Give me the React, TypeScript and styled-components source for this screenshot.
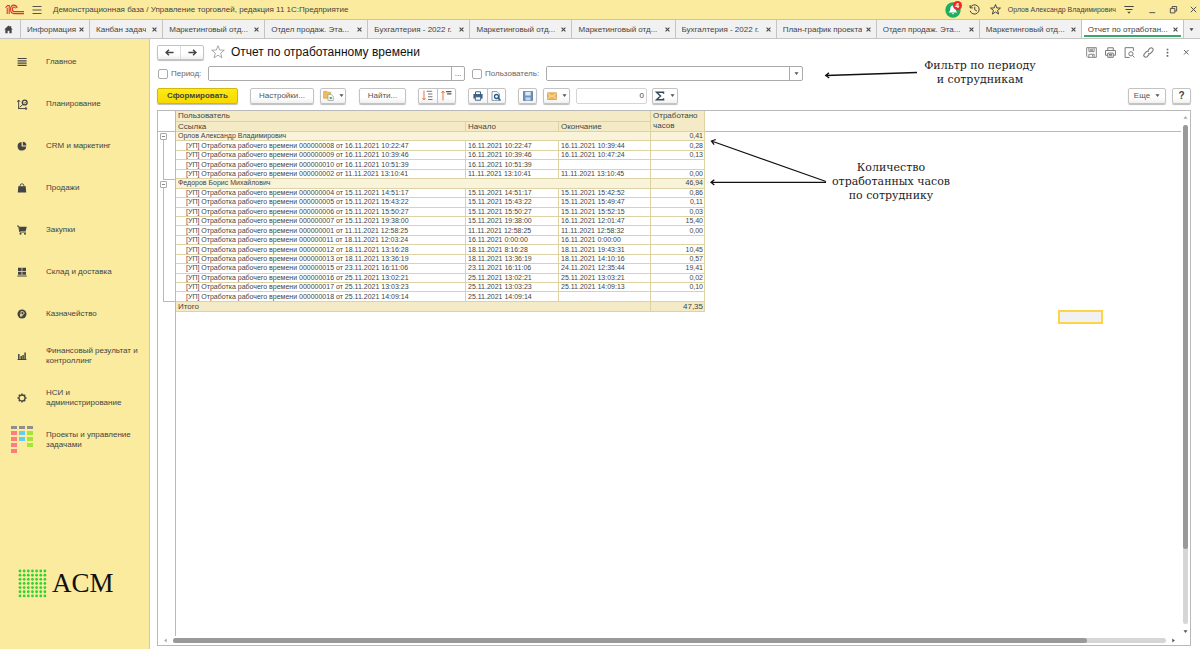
import React from "react";
import styled, { createGlobalStyle, css } from "styled-components";

const Global = createGlobalStyle`
  * { box-sizing: border-box; }
  body { margin: 0; background: #fff; }
  body, button, input { font-family: "Liberation Sans", Arial, sans-serif; font-size: 8px; color: #444; }
  button { padding: 0; border: 0; background: none; }
  svg { display: block; flex: none; }
`;

const Page = styled.div`
  position: relative;
  display: flex;
  flex-direction: column;
  min-height: 100vh;
`;

/* ---------- window header ---------- */
const TitleBar = styled.header`
  display: flex;
  align-items: center;
  height: 19px;
  padding: 0 3px 0 5px;
  background: #fbeb9e;
`;
const AppTitle = styled.div`
  flex: 1;
  padding-left: 11px;
  white-space: nowrap;
`;
const MenuButton = styled.button`
  margin-left: 8px;
`;
const TitleTools = styled.div`
  display: flex;
  align-items: center;
`;
const Bell = styled.button`
  position: relative;
  margin-right: 8px;
`;
const Badge = styled.span`
  position: absolute;
  top: -1px;
  right: -1px;
  width: 9px;
  height: 9px;
  border-radius: 50%;
  background: #f0262d;
  color: #fff;
  font-size: 7px;
  font-weight: bold;
  line-height: 9px;
  text-align: center;
`;
const UserName = styled.span`
  margin: 0 8px 0 7px;
  font-size: 7px;
`;
const WindowTools = styled.div`
  display: flex;
  align-items: center;
  gap: 12px;
  margin-left: 14px;
`;
const StarSlot = styled.button`
  margin-left: 10px;
`;

/* ---------- tabs ---------- */
const TabBar = styled.nav`
  display: flex;
  height: 20px;
  background: #f1f1f1;
  border-top: 1px solid #c9c4ae;
  border-bottom: 1px solid #c4c4c4;
`;
const HomeTab = styled.button`
  display: grid;
  place-items: center;
  width: 20px;
  flex: none;
  padding-right: 3px;
`;
const Tab = styled.div<{ $basis: number; $active?: boolean }>`
  position: relative;
  display: flex;
  align-items: center;
  justify-content: space-between;
  flex: 1 1 ${(p) => p.$basis}px;
  min-width: 0;
  padding: 0 5px 0 6px;
  border-left: 1px solid #c4c4c4;
  ${(p) =>
    p.$active &&
    css`
      background: #fff;
      &::after {
        content: "";
        position: absolute;
        left: 2px;
        right: 2px;
        bottom: 1px;
        height: 2px;
        background: #3aa866;
      }
    `}
`;
const TabLabel = styled.button`
  overflow: hidden;
  white-space: nowrap;
`;
const TabList = styled.button`
  display: grid;
  place-items: center;
  width: 17px;
  flex: none;
  border-left: 1px solid #c4c4c4;
`;

/* ---------- body ---------- */
const Body = styled.div`
  display: flex;
  flex: 1;
`;
const Sidebar = styled.aside`
  display: flex;
  flex-direction: column;
  width: 150px;
  flex: none;
  padding-top: 2px;
  background: #fbeb9e;
  border-right: 1px solid #cfc9ae;
`;
const NavItem = styled.a`
  display: grid;
  grid-template-columns: 26px 1fr;
  column-gap: 11px;
  align-items: center;
  height: 42px;
  padding: 0 8px 0 9px;
  color: #444;
  line-height: 10px;
  text-decoration: none;
`;
const NavIcon = styled.span`
  display: grid;
  place-items: center;
`;
const Brand = styled.div`
  display: flex;
  align-items: center;
  gap: 5px;
  margin-top: auto;
  padding: 0 0 50px 18px;
  font-family: "Liberation Serif", "Times New Roman", serif;
  font-size: 27px;
  line-height: 32px;
  color: #111;
`;
const Main = styled.main`
  display: flex;
  flex-direction: column;
  flex: 1;
  min-width: 0;
  padding: 5px 9px 3px 7px;
`;

const raised = css`
  border: 1px solid #c3c3c3;
  border-radius: 2px;
  background: linear-gradient(#fff 60%, #f0f0f0);
  box-shadow: 0 1px 1px #bdbdbd;
`;
const HeadingRow = styled.div`
  display: flex;
  align-items: center;
  height: 16px;
`;
const NavPair = styled.div`
  ${raised}
  display: flex;
  width: 47px;
  height: 15px;
  & > button { display: grid; place-items: center; flex: 1; }
  & > button + button { border-left: 1px solid #ddd; }
`;
const Favourite = styled.button`
  margin: 0 6px 0 7px;
`;
const Heading = styled.h1`
  flex: 1;
  margin: 0;
  color: #111;
  font-size: 12px;
  font-weight: normal;
  line-height: 16px;
`;
const HeadingTools = styled.div`
  display: flex;
  align-items: center;
  gap: 8px;
`;

const FilterRow = styled.div`
  display: flex;
  align-items: center;
  height: 15px;
  margin-top: 6px;
`;
const Check = styled.input`
  appearance: none;
  width: 10px;
  height: 10px;
  margin: 0 3px 0 1px;
  border: 1px solid #aaa;
  border-radius: 2px;
  background: #fff;
`;
const FilterLabel = styled.label<{ $width: number }>`
  width: ${(p) => p.$width}px;
  color: #666;
  white-space: nowrap;
`;
const Field = styled.div`
  display: flex;
  width: 257px;
  height: 15px;
  margin-right: 6px;
  border: 1px solid #aaa;
  border-radius: 2px;
  overflow: hidden;
  & > input { flex: 1; min-width: 0; border: 0; padding: 0 4px; outline: 0; }
  & > button { display: grid; place-items: center; width: 13px; border-left: 1px solid #aaa; }
`;

const Toolbar = styled.div`
  display: flex;
  align-items: center;
  height: 17px;
  margin-top: 6px;
`;
const ToolButton = styled.button<{ $width: number; $gap?: number; $primary?: boolean }>`
  ${raised}
  display: flex;
  align-items: center;
  justify-content: center;
  gap: 5px;
  width: ${(p) => p.$width}px;
  height: 16px;
  margin-left: ${(p) => p.$gap ?? 0}px;
  color: #555;
  ${(p) =>
    p.$primary &&
    css`
      border-color: #d3b70a;
      background: linear-gradient(#ffea14, #f7d800);
      color: #444;
      font-weight: bold;
    `}
`;
const HelpMark = styled.b`
  color: #444;
  font-size: 10px;
`;
const ToolPair = styled.div`
  ${raised}
  display: flex;
  width: 38px;
  height: 16px;
  margin-left: 12px;
  & > button { display: grid; place-items: center; flex: 1; }
  & > button + button { border-left: 1px solid #c3c3c3; }
`;
const SumField = styled.input`
  width: 71px;
  height: 16px;
  margin-left: 6px;
  padding: 0 2px;
  border: 1px solid #d5d5d5;
  border-radius: 2px;
  text-align: right;
`;
const Spacer = styled.div`
  flex: 1;
`;

/* ---------- report ---------- */
const line = "#b9b9b9";
const Report = styled.section`
  display: flex;
  flex: 1;
  flex-direction: column;
  margin-top: 6px;
  border: 1px solid ${line};
`;
const ReportRow = styled.div`
  display: flex;
  flex: 1;
`;
const Gutter = styled.div`
  width: 18px;
  flex: none;
  border-right: 1px solid ${line};
`;
const HeadStrip = styled.div`
  height: 21px;
  border-bottom: 1px solid ${line};
`;
const Groups = styled.div`
  display: flex;
  flex-direction: column;
  height: 170px;
`;
const Group = styled.div<{ $rows: number }>`
  display: flex;
  flex-direction: column;
  flex: ${(p) => p.$rows} 1 0;
  padding: 1px 0 0 2px;
`;
const Collapse = styled.button`
  display: grid;
  place-items: center;
  width: 7px;
  height: 7px;
  border: 1px solid #aaa;
  border-radius: 1px;
  &::after { content: ""; width: 3px; height: 1px; background: #888; }
`;
const Bracket = styled.div`
  flex: 1;
  margin-left: 3px;
  border: solid ${line};
  border-width: 0 0 1px 1px;
`;
const Filler = styled.div`
  flex: 1;
`;

const sand = "#dcd2a4";
const Table = styled.table`
  width: 529px;
  height: 201px;
  align-self: flex-start;
  flex: none;
  table-layout: fixed;
  border-collapse: separate;
  border-spacing: 0;
  color: #444;
  font-size: 7px;
  line-height: 8px;
  white-space: nowrap;
`;
const Column = styled.col<{ $width: number }>`
  width: ${(p) => p.$width}px;
`;
const Cell = styled.td<{ $kind?: "group" | "total"; $indent?: boolean; $num?: boolean }>`
  padding: 0 1px 0 ${(p) => (p.$indent ? 10 : 2)}px;
  border: solid ${sand};
  border-width: 0 1px 1px 0;
  text-align: ${(p) => (p.$num ? "right" : "left")};
  ${(p) => p.$kind === "group" && css`background: #f9f3da;`}
  ${(p) =>
    p.$kind === "total" &&
    css`
      height: 10px;
      background: #f4ebc6;
      font-size: 8px;
    `}
`;
const HeadCell = styled.th<{ $height: number }>`
  height: ${(p) => p.$height}px;
  padding: 0 2px;
  border: solid ${sand};
  border-width: 0 1px 1px 0;
  background: #f4ebc6;
  font-size: 8px;
  font-weight: normal;
  line-height: ${(p) => (p.$height > 11 ? 10 : 8)}px;
  text-align: left;
  white-space: normal;
`;

const VScroll = styled.div`
  display: flex;
  flex-direction: column;
  align-items: center;
  width: 9px;
  flex: none;
  padding: 4px 0 2px;
  gap: 5px;
`;
const HScroll = styled.div`
  display: flex;
  align-items: center;
  height: 9px;
  flex: none;
  padding: 0 14px 0 5px;
  gap: 5px;
`;
const Track = styled.div<{ $vertical?: boolean }>`
  display: flex;
  flex: 1;
  flex-direction: ${(p) => (p.$vertical ? "column" : "row")};
  ${(p) => (p.$vertical ? "width: 5px;" : "height: 5px;")}
  border-radius: 3px;
  background: #d6d6d6;
`;
const Thumb = styled.div<{ $share: number }>`
  flex: 0 0 ${(p) => p.$share}%;
  border-radius: 3px;
  background: #999;
`;

/* ---------- notes over the report ---------- */
const Note = styled.p<{ $x: number; $y: number; $width: number }>`
  position: absolute;
  left: ${(p) => p.$x}px;
  top: ${(p) => p.$y}px;
  width: ${(p) => p.$width}px;
  margin: 0;
  color: #222;
  font-family: "DejaVu Serif", serif;
  font-size: 11px;
  line-height: 14px;
  text-align: center;
  white-space: nowrap;
`;
const Arrows = styled.svg`
  position: absolute;
  left: 700px;
  top: 60px;
  pointer-events: none;
`;
const Selection = styled.div`
  position: absolute;
  left: 1058px;
  top: 310px;
  width: 45px;
  height: 14px;
  border: 2px solid #fbd44a;
  background: #f1f1f1;
`;

/* ---------- icons ---------- */
type IconProps = { size?: number; box?: number; color?: string; sw?: number; children: React.ReactNode };
const Icon = ({ size = 10, box = 10, color = "#444", sw = 1, children }: IconProps) => (
  <svg width={size} height={size} viewBox={`0 0 ${box} ${box}`} fill="none" stroke={color} strokeWidth={sw}>
    {children}
  </svg>
);
const Cross = ({ size = 5, sw = 1.3 }) => (
  <Icon size={size} box={6} sw={sw}>
    <path d="M.7.7l4.6 4.6M5.3.7L.7 5.3" />
  </Icon>
);
const Caret = ({ dir = "down", color = "#555" }: { dir?: "down" | "up" | "left" | "right"; color?: string }) => {
  const turn = { down: 0, left: 90, up: 180, right: 270 }[dir];
  return (
    <svg width="5" height="5" viewBox="0 0 5 5">
      <path d="M.5 1.3h4L2.5 3.9z" fill={color} transform={`rotate(${turn} 2.5 2.5)`} />
    </svg>
  );
};
const starPath = "M5 .5l1.2 3.100 3.300.1-2.600 2.100.9 3.300L5 7.300 2.200 9.100l.9-3.300L.5 3.700l3.300-.1z";
const ArrowIcon = ({ flip }: { flip?: boolean }) => (
  <Icon size={9} sw={1.6}>
    <path d={flip ? "M.5 5h8M5.6 2L8.8 5 5.6 8" : "M9.5 5h-8M4.4 2L1.2 5l3.2 3"} />
  </Icon>
);
const Logo1C = () => (
  <svg width="19" height="11" viewBox="0 0 19 11" fill="none" stroke="#d9372b" strokeWidth="1.1">
    <path d="M.5 3.600L2.600 1.500h1.600V10M2.200 10V3.800" />
    <path d="M12.200 4C11.600 2.200 10.300 1.100 8.800 1.100 6.700 1.100 5.600 3.100 5.600 5.300s1.300 4.300 3.600 4.300H19" />
    <path d="M10.500 4.300C10.200 3.400 9.600 3 8.900 3 7.800 3 7.400 4 7.400 5.300S8 7.600 9.300 7.600H19" />
  </svg>
);
const FloppyIcon = () => (
  <Icon size={11} color="#777" sw={0.8}>
    <path d="M.6.6h8.800v8.800H1.600L.6 8.400zM2.600.6v3.600h4.800V.6M2.600 9.400V6.600h4.800v2.800M6 7.200v1.600M3.600 2h2.800M3.600 3h2.800" />
  </Icon>
);
const PrinterIcon = () => (
  <Icon size={11} color="#777" sw={0.9}>
    <path d="M2.500 3V.7h5V3M2.500 7.500h-2V3.200h9v4.300h-2M2.500 5.500h5v3.900h-5zM3.600 6.800h2.800M3.600 8h2.800" />
  </Icon>
);
const PreviewIcon = () => (
  <Icon size={11} color="#777" sw={0.9}>
    <path d="M5 9.500H1V.6h7.500v3M7.700 7.700l1.800 1.800" />
    <circle cx="6.300" cy="6.200" r="1.900" />
  </Icon>
);
const LinkIcon = () => (
  <Icon size={11} color="#777">
    <path d="M4.400 3.200l1.800-1.900a1.700 1.700 0 0 1 2.500 2.500L6.900 5.700a1.500 1.500 0 0 1-2.200 0M5.600 6.800L3.800 8.700a1.700 1.700 0 0 1-2.500-2.500L3.100 4.300a1.500 1.500 0 0 1 2.200 0" />
  </Icon>
);

const navIcons = {
  main: <Icon><path d="M.6 1.500h9M.6 3.800h9M.6 6.100h9M.6 8.400h9" strokeWidth="1.200" /></Icon>,
  plan: (
    <Icon size={11}>
      <path d="M1.500 9V1.300M.3 2.500L1.500.9l1.200 1.600M1.200 8.700h7.500M7.500 7.500L9.200 8.700 7.500 9.900M2.500 7.500L5.200 5" strokeWidth=".9" />
      <circle cx="7" cy="3.200" r="2.200" strokeWidth="1.200" />
      <path d="M6.200 3.200l.7.700 1.300-1.500" strokeWidth=".8" />
    </Icon>
  ),
  pie: (
    <Icon>
      <path d="M4.600 1v4.500h4.600A4.300 4.300 0 1 1 4.600 1z" fill="#444" stroke="none" />
      <path d="M5.800.8a3.900 3.900 0 0 1 3.600 3.600H5.800z" fill="#444" stroke="none" />
    </Icon>
  ),
  bag: (
    <Icon>
      <path d="M1.300 3.300h7.400l.5 6.200H.8z" fill="#444" stroke="none" />
      <path d="M3.100 5V2.700a1.900 1.900 0 0 1 3.800 0V5" strokeWidth=".9" />
    </Icon>
  ),
  cart: (
    <Icon>
      <path d="M0 1h1.600l1.200 6h6" />
      <path d="M2 1.800h7.800L8.700 6H2.700z" fill="#444" stroke="none" />
      <circle cx="3.500" cy="8.700" r="1" fill="#444" stroke="none" />
      <circle cx="8" cy="8.700" r="1" fill="#444" stroke="none" />
    </Icon>
  ),
  store: (
    <Icon>
      <path d="M1 .8h3.600v3.300H1zM5.300.8h3.700v3.300H5.300zM1 4.700h3.600v3H1zM5.300 4.700h3.700v3H5.300zM.3 8.400h9.400v1H.3z" fill="#444" stroke="none" />
    </Icon>
  ),
  coin: (
    <Icon>
      <circle cx="5" cy="5" r="4.500" fill="#444" stroke="none" />
      <path d="M4 8V2.600h1.600a1.400 1.400 0 0 1 0 2.900H3M3 6.700h2.800" stroke="#fbeb9e" strokeWidth=".8" />
    </Icon>
  ),
  bars: (
    <Icon>
      <path d="M1.800 3V8M4.200 5V8M6.100 4V8M8.100 1.500V8" strokeWidth="1.500" />
      <path d="M.6 8.500h8.800" />
    </Icon>
  ),
  gear: (
    <Icon>
      <circle cx="5" cy="5" r="3" strokeWidth="1.300" />
      <path d="M5 .5v1.500M5 8v1.500M.5 5H2M8 5h1.500M1.800 1.800l1.100 1.100M7.100 7.100l1.100 1.100M8.200 1.800L7.100 2.900M2.900 7.100L1.800 8.200" strokeWidth="1.400" />
    </Icon>
  ),
  board: (
    <svg width="24" height="30" viewBox="0 0 24 30">
      {[0, 8, 16].map((x) => <rect key={x} x={x + 1} y="1" width="6" height="3" fill="#8f8f8f" />)}
      {[6, 12, 18, 24].map((y) => <rect key={y} x="1" y={y} width="6" height="4" fill="#ff7c82" />)}
      {[6, 12].map((y) => <rect key={y} x="9" y={y} width="6" height="4" fill="#62cff2" />)}
      {[6, 12, 18].map((y) => <rect key={y} x="17" y={y} width="6" height="4" fill="#a3e635" />)}
    </svg>
  ),
};
const navItems: [keyof typeof navIcons, string][] = [
  ["main", "Главное"],
  ["plan", "Планирование"],
  ["pie", "CRM и маркетинг"],
  ["bag", "Продажи"],
  ["cart", "Закупки"],
  ["store", "Склад и доставка"],
  ["coin", "Казначейство"],
  ["bars", "Финансовый результат и контроллинг"],
  ["gear", "НСИ и администрирование"],
  ["board", "Проекты и управление задачами"],
];

const tabs: [string, number][] = [
  ["Информация", 69],
  ["Канбан задач", 73],
  ["Маркетинговый отд...", 102],
  ["Отдел продаж. Эта...", 103],
  ["Бухгалтерия - 2022 г.", 102],
  ["Маркетинговый отд...", 102],
  ["Маркетинговый отд...", 103],
  ["Бухгалтерия - 2022 г.", 101],
  ["План-график проекта", 100],
  ["Отдел продаж. Эта...", 103],
  ["Маркетинговый отд...", 102],
  ["Отчет по отработан...", 102],
];

type Entry = [number: string, from: string, start: string, end: string, hours: string];
const groups: { name: string; hours: string; entries: Entry[] }[] = [
  {
    name: "Орлов Александр Владимирович",
    hours: "0,41",
    entries: [
      ["000000008", "16.11.2021 10:22:47", "16.11.2021 10:22:47", "16.11.2021 10:39:44", "0,28"],
      ["000000009", "16.11.2021 10:39:46", "16.11.2021 10:39:46", "16.11.2021 10:47:24", "0,13"],
      ["000000010", "16.11.2021 10:51:39", "16.11.2021 10:51:39", "", ""],
      ["000000002", "11.11.2021 13:10:41", "11.11.2021 13:10:41", "11.11.2021 13:10:45", "0,00"],
    ],
  },
  {
    name: "Федоров Борис Михайлович",
    hours: "46,94",
    entries: [
      ["000000004", "15.11.2021 14:51:17", "15.11.2021 14:51:17", "15.11.2021 15:42:52", "0,86"],
      ["000000005", "15.11.2021 15:43:22", "15.11.2021 15:43:22", "15.11.2021 15:49:47", "0,11"],
      ["000000006", "15.11.2021 15:50:27", "15.11.2021 15:50:27", "15.11.2021 15:52:15", "0,03"],
      ["000000007", "15.11.2021 19:38:00", "15.11.2021 19:38:00", "16.11.2021 12:01:47", "15,40"],
      ["000000001", "11.11.2021 12:58:25", "11.11.2021 12:58:25", "11.11.2021 12:58:32", "0,00"],
      ["000000011", "18.11.2021 12:03:24", "16.11.2021 0:00:00", "16.11.2021 0:00:00", ""],
      ["000000012", "18.11.2021 13:16:28", "18.11.2021 8:16:28", "18.11.2021 19:43:31", "10,45"],
      ["000000013", "18.11.2021 13:36:19", "18.11.2021 13:36:19", "18.11.2021 14:10:16", "0,57"],
      ["000000015", "23.11.2021 16:11:06", "23.11.2021 16:11:06", "24.11.2021 12:35:44", "19,41"],
      ["000000016", "25.11.2021 13:02:21", "25.11.2021 13:02:21", "25.11.2021 13:03:21", "0,02"],
      ["000000017", "25.11.2021 13:03:23", "25.11.2021 13:03:23", "25.11.2021 14:09:13", "0,10"],
      ["000000018", "25.11.2021 14:09:14", "25.11.2021 14:09:14", "", ""],
    ],
  },
];

const Header = () => (
  <TitleBar>
    <Logo1C />
    <MenuButton aria-label="Меню">
      <Icon><path d="M.5 1.500h9M.5 5h9M.5 8.500h9" strokeWidth=".9" /></Icon>
    </MenuButton>
    <AppTitle>Демонстрационная база / Управление торговлей, редакция 11 1С:Предприятие</AppTitle>
    <TitleTools>
      <Bell aria-label="Оповещения">
        <svg width="16" height="16" viewBox="0 0 16 16">
          <circle cx="8" cy="8" r="7.700" fill="#21ad5e" />
          <path d="M8 3.500c2 0 2.600 1.500 2.700 3.500.1 1.700.6 2.500 1.800 3.500h-9C4.700 9.500 5.200 8.700 5.300 7c.1-2 .7-3.500 2.700-3.500zM6.500 11.200h3L8 12.600z" fill="#fff" />
        </svg>
        <Badge>4</Badge>
      </Bell>
      <button aria-label="История">
        <Icon size={11}>
          <path d="M1.200 3.200A4.200 4.200 0 1 1 1 6.200M1 1v2.500h2.500M5.200 2.500v2.700l2 1.200" strokeWidth=".9" />
        </Icon>
      </button>
      <StarSlot aria-label="Избранное"><Icon size={11}><path d={starPath} strokeWidth=".9" /></Icon></StarSlot>
      <UserName>Орлов Александр Владимирович</UserName>
      <button aria-label="Настройка панели">
        <Icon><path d="M.3 1.500h9.400M1.500 4.500h7" /><path d="M3.300 6.700h3.400L5 8.700z" fill="#444" stroke="none" /></Icon>
      </button>
      <WindowTools>
        <button aria-label="Свернуть"><Icon size={9}><path d="M1.500 8.500h6.500" /></Icon></button>
        <button aria-label="Восстановить">
          <Icon size={9}><path d="M1.500 3.800h5v5h-5zM3.500 3.800V1.700h5v5h-2" /></Icon>
        </button>
        <button aria-label="Закрыть"><Cross size={7} sw={0.8} /></button>
      </WindowTools>
    </TitleTools>
  </TitleBar>
);

const Tabs = () => (
  <TabBar>
    <HomeTab aria-label="Начальная страница">
      <Icon size={9}><path d="M5 .6L.3 5h1.200v4.200h2.500V6.300h2v2.900h2.500V5h1.200L8 3.300V1.200H6.800v1z" fill="#444" stroke="none" /></Icon>
    </HomeTab>
    {tabs.map(([label, basis], i) => (
      <Tab key={i} $basis={basis} $active={i === tabs.length - 1}>
        <TabLabel>{label}</TabLabel>
        <button aria-label="Закрыть вкладку"><Cross /></button>
      </Tab>
    ))}
    <TabList aria-label="Список вкладок"><Caret color="#444" /></TabList>
  </TabBar>
);

const Tools = () => (
  <Toolbar>
    <ToolButton $width={81} $primary>Сформировать</ToolButton>
    <ToolButton $width={64} $gap={12}>Настройки...</ToolButton>
    <ToolButton $width={26} $gap={6} aria-label="Варианты отчета">
      <Icon size={11}>
        <path d="M.5 1.200h3l.8.8H7v5.500H.5z" fill="#efbd5c" stroke="#d99f3c" strokeWidth=".6" />
        <path d="M4.500 4h3l1.800 1.800v3.700H4.500z" fill="#fff" stroke="#999" strokeWidth=".7" />
        <circle cx="7" cy="7.300" r="1.100" fill="#56ad6b" stroke="none" />
      </Icon>
      <Caret />
    </ToolButton>
    <ToolButton $width={47} $gap={13}>Найти...</ToolButton>
    <ToolPair>
      <button aria-label="Развернуть группы">
        <Icon size={11}>
          <path d="M1.800.5v8.500M.3 7.300L1.800 9l1.500-1.700" stroke="#ef6c3c" strokeWidth=".9" />
          <path d="M4.200 1.200h5M5.500 3.700h4M5.500 6.200h4M5.500 8.700h4" stroke="#777" />
        </Icon>
      </button>
      <button aria-label="Свернуть группы">
        <Icon size={11}>
          <path d="M1.800 9.500V1M.3 2.700L1.800 1l1.500 1.700" stroke="#ef6c3c" strokeWidth=".9" />
          <path d="M4.500 1.500h5M5.500 3.500h4" stroke="#555" strokeWidth="1.200" />
        </Icon>
      </button>
    </ToolPair>
    <ToolPair>
      <button aria-label="Печать">
        <Icon size={10} color="#3e6286">
          <path d="M2.500 3V.8h5V3" />
          <path d="M.4 3h9.200v4.500H.4z" fill="#3e6286" stroke="none" />
          <path d="M2.300 5.800h5.400v3.400H2.300z" fill="#fff" />
        </Icon>
      </button>
      <button aria-label="Просмотр">
        <Icon size={10} color="#8a98a5">
          <path d="M1 .6h5l2.500 2.500v6.300H1z" fill="#fff" />
          <circle cx="5.500" cy="5.500" r="2" stroke="#245f8f" strokeWidth="1.300" />
          <path d="M7 7l2.500 2.500" stroke="#245f8f" strokeWidth="1.500" />
        </Icon>
      </button>
    </ToolPair>
    <ToolButton $width={19} $gap={12} aria-label="Сохранить">
      <Icon size={10}>
        <path d="M.5.5h9v9h-9z" fill="#6d93bd" stroke="#5079a6" strokeWidth=".8" />
        <path d="M2.300.8h5.400v3.700H2.300z" fill="#dfe9f3" stroke="none" />
        <path d="M2.500 6.300h5v3.200h-5z" fill="#c5d5e5" stroke="none" />
      </Icon>
    </ToolButton>
    <ToolButton $width={27} $gap={6} aria-label="Отправить">
      <Icon size={10}>
        <path d="M.3 1.800h9.400v6.700H.3z" fill="#efb85a" stroke="#d3943a" strokeWidth=".7" />
        <path d="M.6 2.200L5 5.700l4.400-3.500M.6 8.200l3-3.300M9.400 8.200l-3-3.300" stroke="#fff1cf" strokeWidth=".7" />
      </Icon>
      <Caret />
    </ToolButton>
    <SumField aria-label="Сумма" value="0" readOnly />
    <ToolButton $width={26} $gap={5} aria-label="Функция">
      <Icon size={10} color="#344a5c"><path d="M8.500 2.800V1.200H1.500l4 3.800-4 3.800h7V7.200" strokeWidth="1.500" /></Icon>
      <Caret />
    </ToolButton>
    <Spacer />
    <ToolButton $width={38}>Еще<Caret /></ToolButton>
    <ToolButton $width={19} $gap={6}><HelpMark>?</HelpMark></ToolButton>
  </Toolbar>
);

const ReportTable = () => (
  <Table>
    <colgroup>
      <Column $width={290} />
      <Column $width={93} />
      <Column $width={92} />
      <Column $width={54} />
    </colgroup>
    <thead>
      <tr>
        <HeadCell $height={11} colSpan={3}>Пользователь</HeadCell>
        <HeadCell $height={21} rowSpan={2}>Отработано часов</HeadCell>
      </tr>
      <tr>
        <HeadCell $height={10}>Ссылка</HeadCell>
        <HeadCell $height={10}>Начало</HeadCell>
        <HeadCell $height={10}>Окончание</HeadCell>
      </tr>
    </thead>
    {groups.map((g) => (
      <tbody key={g.name}>
        <tr>
          <Cell $kind="group" colSpan={3}>{g.name}</Cell>
          <Cell $kind="group" $num>{g.hours}</Cell>
        </tr>
        {g.entries.map(([no, from, start, end, hours]) => (
          <tr key={no}>
            <Cell $indent>{`[УП] Отработка рабочего времени ${no} от ${from}`}</Cell>
            <Cell>{start}</Cell>
            <Cell>{end}</Cell>
            <Cell $num>{hours}</Cell>
          </tr>
        ))}
      </tbody>
    ))}
    <tfoot>
      <tr>
        <Cell $kind="total" colSpan={3}>Итого</Cell>
        <Cell $kind="total" $num>47,35</Cell>
      </tr>
    </tfoot>
  </Table>
);

export default function App() {
  return (
    <Page>
      <Global />
      <Header />
      <Tabs />
      <Body>
        <Sidebar>
          {navItems.map(([icon, label]) => (
            <NavItem key={icon} href="#">
              <NavIcon>{navIcons[icon]}</NavIcon>
              <span>{label}</span>
            </NavItem>
          ))}
          <Brand>
            <svg width="29" height="29" viewBox="0 0 29 29" fill="#2fd32f">
              {Array.from({ length: 49 }, (_, i) => (
                <circle key={i} cx={2 + (i % 7) * 4.15} cy={2 + Math.floor(i / 7) * 4.15} r="1.400" />
              ))}
            </svg>
            ACM
          </Brand>
        </Sidebar>
        <Main>
          <HeadingRow>
            <NavPair>
              <button aria-label="Назад"><ArrowIcon /></button>
              <button aria-label="Вперед"><ArrowIcon flip /></button>
            </NavPair>
            <Favourite aria-label="В избранное">
              <Icon size={14} color="#999" sw={0.6}><path d={starPath} /></Icon>
            </Favourite>
            <Heading>Отчет по отработанному времени</Heading>
            <HeadingTools>
              <button aria-label="Сохранить"><FloppyIcon /></button>
              <button aria-label="Печать"><PrinterIcon /></button>
              <button aria-label="Просмотр"><PreviewIcon /></button>
              <button aria-label="Ссылка"><LinkIcon /></button>
              <button aria-label="Еще">
                <Icon size={11} color="#666"><path d="M5 1.500v1.500M5 4.400v1.500M5 7.300v1.500" strokeWidth="1.500" /></Icon>
              </button>
              <button aria-label="Закрыть">
                <Icon size={10} color="#666"><path d="M3 3l4.500 4.500M7.500 3L3 7.500" /></Icon>
              </button>
            </HeadingTools>
          </HeadingRow>
          <FilterRow>
            <Check type="checkbox" id="period-on" />
            <FilterLabel htmlFor="period-on" $width={37}>Период:</FilterLabel>
            <Field>
              <input aria-label="Период" />
              <button>...</button>
            </Field>
            <Check type="checkbox" id="user-on" />
            <FilterLabel htmlFor="user-on" $width={61}>Пользователь:</FilterLabel>
            <Field>
              <input aria-label="Пользователь" />
              <button aria-label="Выбрать"><Caret /></button>
            </Field>
          </FilterRow>
          <Tools />
          <Report>
            <ReportRow>
              <Gutter>
                <HeadStrip />
                <Groups>
                  {groups.map((g) => (
                    <Group key={g.name} $rows={g.entries.length + 1}>
                      <Collapse aria-label="Свернуть группу" />
                      <Bracket />
                    </Group>
                  ))}
                </Groups>
              </Gutter>
              <ReportTable />
              <Filler><HeadStrip /></Filler>
              <VScroll>
                <Caret dir="up" color="#aaa" />
                <Track $vertical><Thumb $share={85} /></Track>
                <Caret />
              </VScroll>
            </ReportRow>
            <HScroll>
              <Caret dir="left" color="#aaa" />
              <Track><Thumb $share={92} /></Track>
              <Caret dir="right" />
            </HScroll>
          </Report>
        </Main>
      </Body>

      <Arrows width="220" height="130" viewBox="0 0 220 130" fill="none" stroke="#111" strokeWidth="1.300">
        <path d="M217 12.500L126 15.500M129 12.700l-3.300 2.800 3.500 2.500" />
        <path d="M126 121.500L11.500 81M15.800 79.500l-4.300 1.500 2.600 3.700" />
        <path d="M126 122.300H11M14.300 119.700L11 122.300l3.300 2.600" />
      </Arrows>
      <Note $x={915} $y={59} $width={130}>Фильтр по периоду<br /> и сотрудникам</Note>
      <Note $x={825} $y={161} $width={132}>Количество<br />отработанных часов<br />по сотруднику</Note>
      <Selection />
    </Page>
  );
}
